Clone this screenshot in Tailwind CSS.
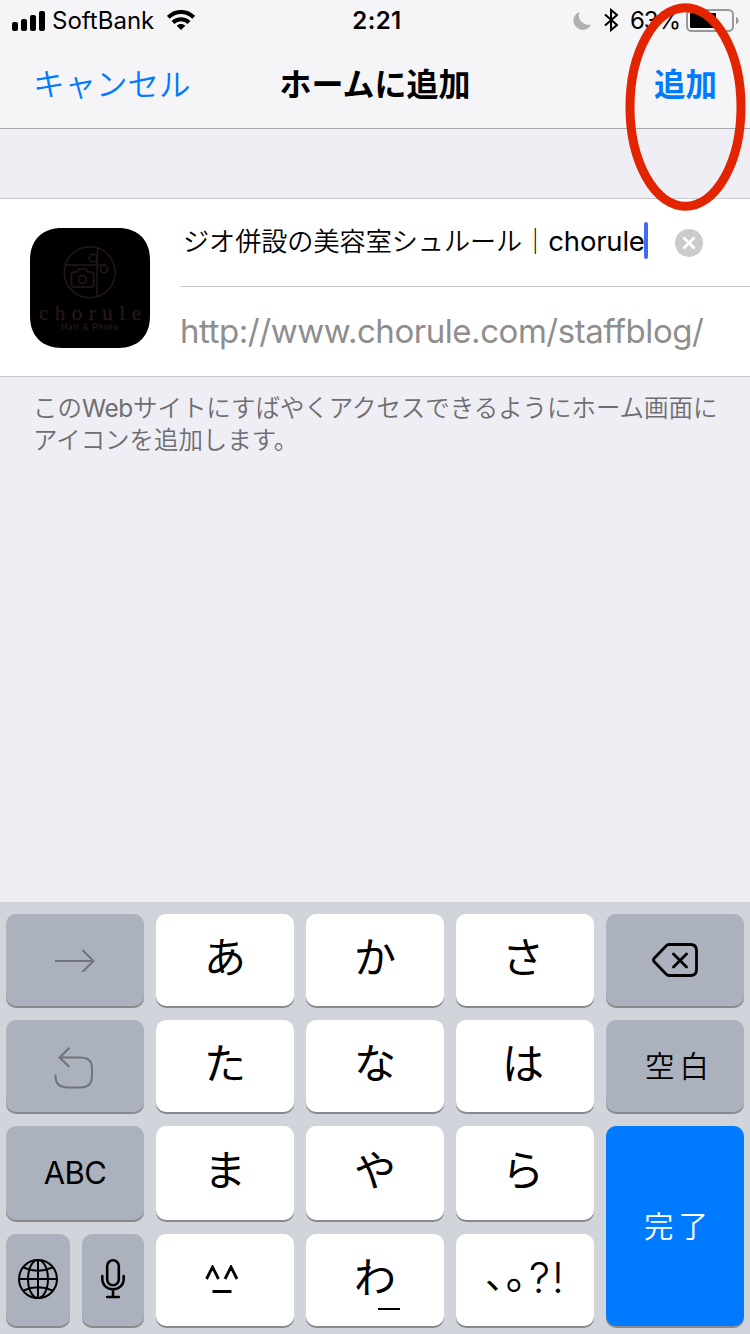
<!DOCTYPE html>
<html lang="ja">
<head>
    <meta charset="UTF-8">
    <meta name="viewport" content="width=device-width, initial-scale=1.0">
    <title>ホームに追加</title>
    <script src="https://cdn.jsdelivr.net/npm/@tailwindcss/browser@4"></script>
</head>
<body class="bg-[#efeef4] text-black font-['Inter','Noto_Sans_CJK_JP',sans-serif] w-[750px] h-[1334px] overflow-hidden">
    <div class="relative flex flex-col w-[750px] h-[1334px]">
        <header class="h-[129px] bg-[#f5f5f7] border-b border-[#a7a7ac]">
            <!-- status bar -->
            <div class="grid grid-cols-3 h-10 pl-3 pr-[11px] text-[24px] leading-10 whitespace-nowrap">
                <div class="flex items-center">
                    <svg class="w-[33px] h-5 mr-[7px]" viewBox="0 0 33 20">
                        <rect x="0" y="11" width="6" height="9" rx="2"/>
                        <rect x="9" y="8" width="6" height="12" rx="2"/>
                        <rect x="18" y="4" width="6" height="16" rx="2"/>
                        <rect x="27" y="0" width="6" height="20" rx="2"/>
                    </svg>
                    <span class="pt-px">SoftBank</span>
                    <svg class="w-7 h-5 ml-[13px] -mt-px" viewBox="0 0 28 20">
                        <path d="M1.300 7.300C8.500 .2 19.500 .2 26.700 7.300M6 12.500C10.500 8.200 17.500 8.200 22 12.500" fill="none" stroke="#000" stroke-width="4"/>
                        <path d="M9.700 15.800C12 13.500 16 13.500 18.300 15.800L14 20Z"/>
                    </svg>
                </div>
                <div class="pt-px pl-[3px] text-center font-semibold tracking-[0.4px]">2:21</div>
                <div class="flex items-center justify-end">
                    <svg class="w-[18px] h-[18px] mr-[13px]" viewBox="0 0 18 18">
                        <path d="M6.500 0A9.200 9.200 0 1 0 18 12.500A9.500 9.500 0 0 1 6.500 0Z" fill="#b0b0b2"/>
                    </svg>
                    <svg class="w-[14px] h-6 mr-3 -mt-px" viewBox="0 0 14 24">
                        <path d="M1 6.500L13 17L7 22V2L13 7L1 17.500" fill="none" stroke="#000" stroke-width="2"/>
                    </svg>
                    <span class="pt-px mr-[6px] tracking-[-1.1px]">63%</span>
                    <svg class="w-[53px] h-[23px] -mt-px" viewBox="0 0 53 23">
                        <rect x="1" y="1" width="46" height="21" rx="4.500" fill="none" stroke="#98989a" stroke-width="2"/>
                        <rect x="4" y="4" width="26" height="15" rx="1"/>
                        <path d="M50 8C53.500 9 53.500 14 50 15Z" fill="#98989a"/>
                    </svg>
                </div>
            </div>
            <!-- nav bar -->
            <div class="grid grid-cols-3 h-[88px] px-[33px] pt-px text-[31.500px] leading-[88px] whitespace-nowrap">
                <div class="text-[#007aff] font-[350]">キャンセル</div>
                <h1 class="text-center text-[32px] font-bold">ホームに追加</h1>
                <div class="text-right text-[#007aff] font-bold">追加</div>
            </div>
        </header>

        <section class="mt-[69px] flex h-[179px] bg-white border-y border-[#c8c7cc]">
            <svg class="w-[120px] h-[120px] mt-[29px] ml-[30px] mr-[30px] shrink-0" viewBox="0 0 120 120">
                <path d="M32 0H88C108 0 120 12 120 32V88C120 108 108 120 88 120H32C12 120 0 108 0 88V32C0 12 12 0 32 0Z"/>
                <g fill="none" stroke="#261815" stroke-width="1.500">
                    <circle cx="59.700" cy="44.300" r="25.500"/>
                    <path d="M36 37H76M67 68V27L68 20"/>
                    <circle cx="63" cy="30" r="3.800"/>
                    <circle cx="74" cy="41" r="3.800"/>
                    <path d="M44 44H47L49 41H56L58 44H61Q63.500 44 63.500 47V56Q63.500 59 61 59H44Q41.500 59 41.500 56V47Q41.500 44 44 44Z"/>
                    <circle cx="52.500" cy="51.500" r="4"/>
                </g>
                <g fill="#261815">
                    <text x="9" y="91.500" font-size="21" font-family="Liberation Serif, serif" textLength="102" stroke="#261815" stroke-width=".3">chorule</text>
                    <text x="31" y="102" font-size="8.500" font-weight="700" font-family="Lato, sans-serif" textLength="57">Hair &amp; Photo</text>
                </g>
            </svg>
            <div class="flex-1">
                <div class="flex items-center h-[88px] border-b border-[#c8c7cc] whitespace-nowrap">
                    <span class="ml-[3px] mb-[2px] text-[26.100px] font-[350]">ジオ併設の美容室シュルール｜</span>
                    <span class="mb-px text-[27.500px] tracking-[-0.200px]">chorule</span>
                    <span class="w-1 h-[37px] -mt-[5px] -ml-px bg-[#426bf2] rounded-sm"></span>
                    <svg class="w-7 h-7 ml-[27px]" viewBox="0 0 28 28">
                        <circle cx="14" cy="14" r="14" fill="#cbcbcb"/>
                        <path d="M8.500 8.500L19.500 19.500M19.500 8.500L8.500 19.500" stroke="#fff" stroke-width="2.800"/>
                    </svg>
                </div>
                <div class="text-[33px] leading-[89px] tracking-[-0.450px] text-[#8e8e8e] whitespace-nowrap">http://www.chorule.com/staffblog/</div>
            </div>
        </section>

        <p class="pl-[33px] pt-[15px] text-[24.450px] leading-8 text-[#6d6d72] font-[350] whitespace-nowrap">この<span class="font-normal tracking-[-0.3px]">Web</span>サイトにすばやくアクセスできるようにホーム画面に<br>アイコンを追加します。</p>

        <main class="mt-auto h-[432px] bg-[#d1d4db] px-[6px] pt-3">
            <div class="grid grid-cols-5 grid-rows-[92px_92px_94px_92px] gap-x-3 gap-y-[14px] text-[42px] leading-[92px] *:flex *:items-center *:justify-center *:rounded-[10px] *:shadow-[0_2px_0_#898a8d]">
                <div class="bg-[#abb1bd]">
                    <svg class="w-10 h-6" viewBox="0 0 40 24"><path d="M0 13H38M27.500 2L38.500 13L27.500 24" fill="none" stroke="#707379" stroke-width="2"/></svg>
                </div>
                <div class="bg-white pb-1">あ</div>
                <div class="bg-white pb-1">か</div>
                <div class="bg-white pb-1 pr-1">さ</div>
                <div class="bg-[#abb1bd]">
                    <svg class="w-[46px] h-[34px]" viewBox="0 0 46 34">
                        <path d="M17 1.500H38.500Q44.500 1.500 44.500 7.500V26.500Q44.500 32.500 38.500 32.500H17Q15.500 32.500 14 31L2 18.500Q.8 17 2 15.500L14 3Q15.500 1.500 17 1.500ZM21.500 11L34.500 24M34.500 11L21.500 24" fill="none" stroke="#000" stroke-width="2.800" stroke-linecap="round"/>
                    </svg>
                </div>

                <div class="bg-[#abb1bd] pt-1 pr-[2px]">
                    <svg class="w-10 h-[42px]" viewBox="0 0 40 42"><path d="M1.500 27.500V29Q1.500 40.500 14 40.500H26Q38 40.500 38 29V21Q38 10.500 26 10.500H5M15.500 .8L5.500 10.500L15.500 20" fill="none" stroke="#707379" stroke-width="2"/></svg>
                </div>
                <div class="bg-white pb-1">た</div>
                <div class="bg-white pb-1">な</div>
                <div class="bg-white pb-1 pr-1">は</div>
                <div class="bg-[#abb1bd] text-[29.500px] font-[350] gap-[5px] pl-1"><span>空</span><span>白</span></div>

                <div class="bg-[#abb1bd] text-[31px] tracking-[-0.600px]">ABC</div>
                <div class="bg-white pb-1">ま</div>
                <div class="bg-white pb-1">や</div>
                <div class="bg-white pb-1 pr-1">ら</div>
                <div class="row-span-2 bg-[#007aff] text-white text-[29.500px] font-[350] gap-[5px] pl-[2px]"><span>完</span><span>了</span></div>

                <div class="gap-3 shadow-none! *:flex *:h-full *:items-center *:justify-center *:rounded-[10px] *:bg-[#abb1bd] *:shadow-[0_2px_0_#898a8d]">
                    <div class="w-16">
                        <svg class="w-10 h-10 mb-[2px]" viewBox="0 0 40 40" fill="none" stroke="#000" stroke-width="2">
                            <circle cx="20" cy="20" r="19"/>
                            <ellipse cx="20" cy="20" rx="10" ry="19"/>
                            <path d="M20 1V39M1 20H39M5.500 8.500Q20 15 34.500 8.500M5.500 31.500Q20 25 34.500 31.500"/>
                        </svg>
                    </div>
                    <div class="w-[62px]">
                        <svg class="w-6 h-10 mb-[2px]" viewBox="0 0 24 40" fill="none" stroke="#000" stroke-width="2.600" stroke-linecap="round">
                            <rect x="6.200" y="1.300" width="11.600" height="25" rx="5.800"/>
                            <path d="M1.300 17V19.500C1.300 34 22.700 34 22.700 19.500V17M12 31V38M6.200 38H17.800"/>
                        </svg>
                    </div>
                </div>
                <div class="bg-white">
                    <svg class="w-[34px] h-7 mr-[6px] mb-[2px]" viewBox="0 0 34 28"><path d="M1.500 14L7.500 2L13.500 14M20 14L26 2L32 14" fill="none" stroke="#000" stroke-width="2.800"/><path d="M7.500 26.500H26.500" stroke="#000" stroke-width="3"/></svg>
                </div>
                <div class="bg-white relative pb-1">わ<span class="absolute left-[72px] top-[74px] w-[22px] h-[2px] bg-black"></span></div>
                <div class="bg-white pb-1">
                    <div class="flex items-center h-full">
                        <span class="w-5 pb-2 text-[38px]">､</span><span class="w-[23px] pb-2">｡</span><span class="w-[23px] text-[42px] font-light">?</span><span class="w-[12px] text-[42px] font-light">!</span>
                    </div>
                </div>
            </div>
        </main>

        <!-- marker around the add button -->
        <svg class="absolute left-[625px] top-[2px] w-[121px] h-[210px]" viewBox="0 0 121 210"><ellipse cx="60.500" cy="105" rx="55.500" ry="99.300" fill="none" stroke="#e32400" stroke-width="9"/></svg>
    </div>
</body>
</html>
